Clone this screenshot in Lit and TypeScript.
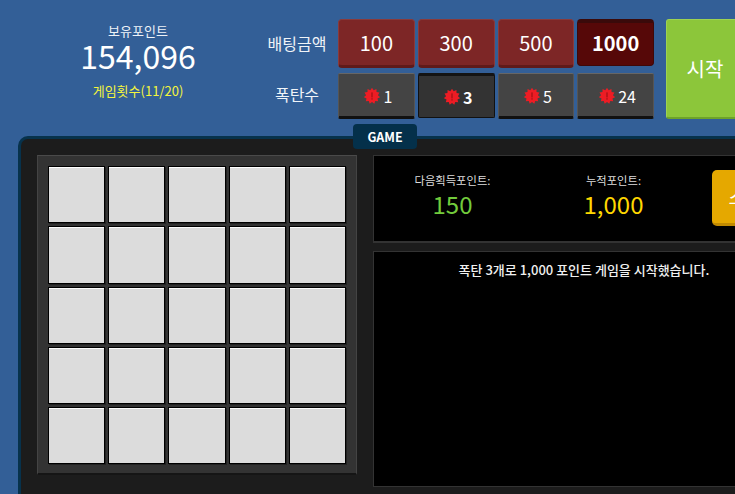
import { LitElement, html, css, svg } from "lit";
import { customElement } from "lit/decorators.js";

const burst = (() => {
  const pts: string[] = [];
  const n = 11;
  for (let i = 0; i < n * 2; i++) {
    const r = i % 2 === 0 ? 8.2 : 6;
    const a = (Math.PI * i) / n;
    pts.push(`${(8 + r * Math.sin(a)).toFixed(2)},${(8 - r * Math.cos(a)).toFixed(2)}`);
  }
  return svg`<polygon points=${pts.join(" ")} fill="#ed1c24"></polygon><rect x="7.4" y="4.4" width="1.2" height="5" fill="#a01015"></rect><rect x="7.4" y="10.2" width="1.2" height="1.4" fill="#a01015"></rect>`;
})();

@customElement("app-root")
export class AppRoot extends LitElement {
  static styles = css`
    :host {
      display: block;
      width: 735px;
      height: 494px;
      overflow: hidden;
      background: #335f97;
      font-family: "Noto Sans CJK KR", "Noto Sans", sans-serif;
      color: #fff;
    }
    .top {
      display: flex;
      width: 900px;
      height: 136px;
      padding-top: 19px;
      box-sizing: border-box;
      align-items: flex-start;
    }
    .info {
      width: 236px;
      margin-left: 20px;
      text-align: center;
      padding-top: 2px;
    }
    .info .t { font-size: 13px; line-height: 19px; color: #eef2f7; }
    .info .n { font-size: 32px; line-height: 36px; margin-top: -3px; }
    .info .c { font-size: 13px; line-height: 20px; color: #f5f53c; margin-top: 8px; }
    .labels {
      width: 82px;
      height: 100px;
      display: grid;
      grid-template-rows: 47px 46px;
      row-gap: 5px;
      font-size: 16px;
      line-height: 22px;
      color: #f0f4f8;
      text-align: center;
      align-items: center;
    }
    .btns {
      width: 316px;
      display: grid;
      grid-template-columns: repeat(4, 1fr);
      grid-template-rows: 49px 46px;
      gap: 5px 3px;
      align-items: start;
    }
    .btn {
      box-sizing: border-box;
      display: flex;
      align-items: center;
      justify-content: center;
      border-radius: 4px;
    }
    .amt {
      height: 49px;
      background: #7d2626;
      border: 1px solid #8a3a3a;
      border-bottom: 3px solid #5f1a1a;
      font-size: 20px;
      padding-bottom: 1px;
    }
    .amt.on {
      height: 47px;
      background: #560808;
      border: 1px solid #3f0808;
      border-top: 4px solid #3a0a0a;
      font-weight: 700;
      padding-bottom: 3px;
    }
    .bomb {
      height: 46px;
      background: #444;
      border: 1px solid #555;
      border-top: 1px solid #666;
      border-bottom: 3px solid #111;
      border-radius: 2px;
      font-size: 16px;
      gap: 3px;
      padding: 1px 0 0 4px;
    }
    .bomb.on {
      height: 45px;
      background: #333;
      border: 1px solid #111;
      border-top: 3px solid #141414;
      font-weight: 700;
      padding: 0 0 0 4px;
    }
    .bomb svg { width: 16px; height: 16px; }
    .start {
      margin-left: 12px;
      width: 78px;
      height: 100px;
      box-sizing: border-box;
      background: #8cc63a;
      border: 1px solid #9ed252;
      border-bottom: 2px solid #6da32a;
      border-radius: 3px 0 0 3px;
      font-size: 20px;
      display: flex;
      align-items: center;
      justify-content: center;
    }
    .panel {
      position: relative;
      margin-left: 18px;
      width: 820px;
      height: 400px;
      box-sizing: border-box;
      background: #1c1c1c;
      border: 3px solid #07324c;
      border-radius: 10px 0 0 0;
      border-right: none;
      border-bottom: none;
      padding: 16px;
      display: flex;
      gap: 16px;
      align-items: flex-start;
    }
    .tab {
      position: absolute;
      left: 332px;
      top: -15px;
      width: 64px;
      height: 25px;
      background: #04304a;
      border-radius: 4px;
      font-size: 12.5px;
      font-weight: 700;
      display: flex;
      align-items: center;
      justify-content: center;
    }
    .board {
      box-sizing: border-box;
      width: 320px;
      height: 320px;
      background: #333;
      border: 1px solid #444;
      border-top: 1px solid #4a4a4a;
      border-bottom: 2px solid #151515;
      display: grid;
      grid-template-columns: repeat(5, 1fr);
      grid-template-rows: repeat(5, 57.25px);
      gap: 3px;
      padding: 10px;
    }
    .cell {
      background: #dcdcdc;
      border: 1px solid #000;
      box-shadow: inset 0 1px 0 #fff, 1px 1px 0 #222;
    }
    .right {
      width: 422px;
      display: flex;
      flex-direction: column;
      gap: 8px;
    }
    .score {
      box-sizing: border-box;
      height: 88px;
      background: #000;
      border: 1px solid #333;
      border-bottom: 2px solid #333;
      display: flex;
      align-items: flex-start;
    }
    .col { width: 161px; margin-left: -2px; margin-right: 2px; text-align: center; padding-top: 16px; }
    .col .l { font-size: 11.3px; line-height: 16px; color: #ddd; }
    .col .v { font-size: 24px; line-height: 32px; margin-top: 0; }
    .green { color: #72cb3c; }
    .yellow { color: #ffd800; }
    .stop {
      box-sizing: border-box;
      margin: 14px 0 0 16px;
      width: 70px;
      height: 56px;
      background: #e5a800;
      border-bottom: 3px solid #c18a00;
      border-radius: 5px;
      font-size: 20px;
      display: flex;
      align-items: center;
      justify-content: center;
      white-space: nowrap;
    }
    .log {
      box-sizing: border-box;
      height: 236px;
      background: #000;
      border: 1px solid #333;
      font-size: 13px;
      font-weight: 500;
      line-height: 18px;
      text-align: center;
      padding-top: 9px;
      color: #f0f0f0;
    }
  `;

  render() {
    const amts = [100, 300, 500, 1000];
    const bombs = [1, 3, 5, 24];
    return html`
      <div class="top">
        <div class="info">
          <div class="t">보유포인트</div>
          <div class="n">154,096</div>
          <div class="c">게임횟수(11/20)</div>
        </div>
        <div class="labels"><div>배팅금액</div><div>폭탄수</div></div>
        <div class="btns">
          ${amts.map((a) => html`<div class="btn amt ${a === 1000 ? "on" : ""}">${a}</div>`)}
          ${bombs.map(
            (b) => html`<div class="btn bomb ${b === 3 ? "on" : ""}"><svg viewBox="0 0 16 16">${burst}</svg>${b}</div>`
          )}
        </div>
        <div class="start">시작</div>
      </div>
      <div class="panel">
        <div class="tab">GAME</div>
        <div class="board">${Array.from({ length: 25 }, () => html`<div class="cell"></div>`)}</div>
        <div class="right">
          <div class="score">
            <div class="col"><div class="l">다음획득포인트:</div><div class="v green">150</div></div>
            <div class="col"><div class="l">누적포인트:</div><div class="v yellow">1,000</div></div>
            <div class="stop">스톱</div>
          </div>
          <div class="log">폭탄 3개로 1,000 포인트 게임을 시작했습니다.</div>
        </div>
      </div>
    `;
  }
}
